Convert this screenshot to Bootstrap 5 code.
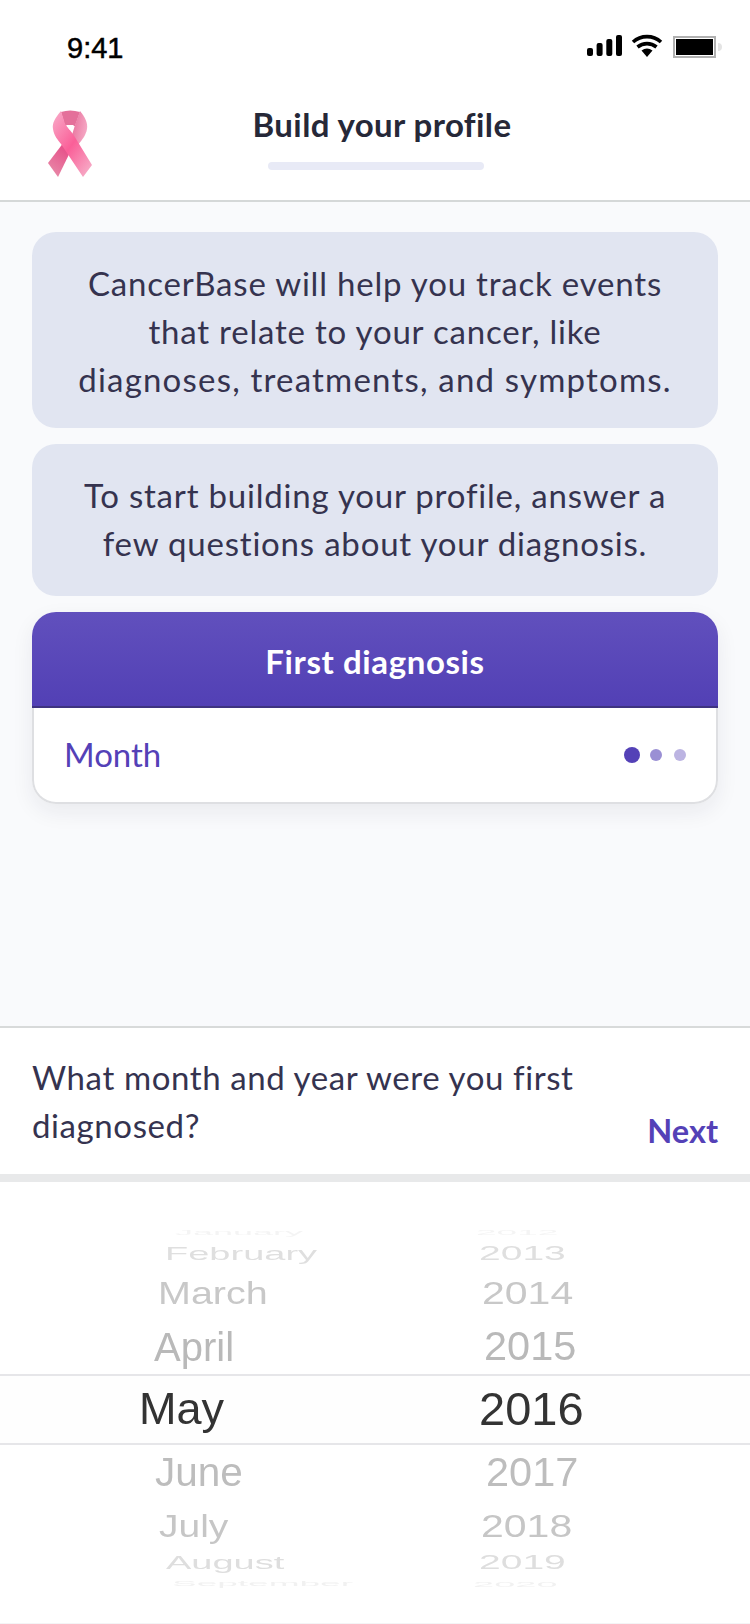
<!DOCTYPE html>
<html lang="en">
<head>
    <meta charset="UTF-8">
    <meta name="viewport" content="width=device-width, initial-scale=1.0">
    <title>Build your profile</title>
    <link href="https://cdn.jsdelivr.net/npm/bootstrap@5.3.3/dist/css/bootstrap.min.css" rel="stylesheet">
    <style>
        body {
            font-family: 'Lato', 'Liberation Sans', sans-serif;
            background-color: #fff;
            color: #35334f;
        }

        .phone {
            width: 750px;
            height: 1624px;
            overflow: hidden;
        }

        /* Status bar */
        .status-bar {
            height: 92px;
            padding: 26px 28px 0 67px;
        }

        .status-time {
            font-family: 'Liberation Sans', sans-serif;
            font-size: 29px;
            line-height: 44px;
            font-weight: 400;
            color: #000;
            -webkit-text-stroke: 0.5px #000;
        }

        .status-icons {
            margin-top: 8px;
        }

        /* Title area */
        .top-bar {
            height: 110px;
            border-bottom: 2px solid #d5d8d8;
        }

        .ribbon-logo {
            left: 47px;
            top: 18px;
        }

        .page-title {
            font-size: 33px;
            letter-spacing: 0.4px;
            line-height: 40px;
            font-weight: 700;
            color: #262838;
            margin: 12px 0 18px 0;
            transform: translateX(7px);
        }

        .title-progress {
            width: 216px;
            height: 8px;
            border-radius: 4px;
            background-color: #e8eaf6;
            transform: translateX(1px);
        }

        /* Conversation */
        .chat-area {
            background-color: #f9fafc;
            padding: 30px 32px 0 32px;
            height: 824px;
        }

        .chat-bubble {
            background-color: #e1e5f1;
            border-radius: 24px;
            font-size: 33px;
            letter-spacing: 0.8px;
            line-height: 48px;
            text-align: center;
            color: #35334f;
            margin-bottom: 16px;
        }

        .line-wide {
            letter-spacing: 1.2px;
        }

        .bubble-one {
            height: 196px;
            padding-top: 27px;
        }

        .bubble-two {
            height: 152px;
            padding-top: 27px;
        }

        .diagnosis-card {
            border: 0;
            border-radius: 24px;
            box-shadow: 0 8px 22px rgba(30, 30, 60, 0.07);
            background-color: #fff;
        }

        .diagnosis-head {
            height: 96px;
            line-height: 98px;
            padding: 0;
            text-align: center;
            font-size: 33px;
            letter-spacing: 0.6px;
            font-weight: 700;
            color: #fff;
            background: linear-gradient(180deg, #6150bd 0%, #5240b5 100%);
            border: 0;
            border-bottom: 2px solid #3e3380;
            border-radius: 24px 24px 0 0 !important;
        }

        .diagnosis-body {
            height: 96px;
            padding: 0 30px 0 30px;
            border: 2px solid #dedfe2;
            border-top: 0;
            border-radius: 0 0 24px 24px;
            color: #5441b7;
            font-size: 33px;
        }

        .step-dot {
            width: 12px;
            height: 12px;
            border-radius: 50%;
            margin-left: 12px;
            background-color: #bcb4e2;
        }

        .step-dot.is-on {
            width: 16px;
            height: 16px;
            background-color: #5441b7;
        }

        .step-dot.is-next {
            margin-left: 10px;
            background-color: #9a8fd4;
        }

        /* Question */
        .question-bar {
            height: 156px;
            border-top: 2px solid #d8dada;
            border-bottom: 8px solid #e8e9ea;
            padding: 25px 32px 0 32px;
        }

        .question-text {
            font-size: 33px;
            letter-spacing: 0.6px;
            line-height: 48px;
            color: #35334f;
        }

        .next-link {
            font-size: 32.5px;
            font-weight: 700;
            line-height: 40px;
            color: #5441b7;
            text-decoration: none;
            margin-top: 58px;
        }

        /* Date wheel */
        .wheel {
            height: 442px;
            padding-top: 48px;
            font-family: 'Liberation Sans', sans-serif;
            border-bottom: 1px solid #f4f4f6;
        }

        .wheel-band {
            left: 0;
            right: 0;
            top: 192px;
            height: 71px;
            background-color: #fefefe;
            border-top: 2px solid #e6e6e9;
            border-bottom: 2px solid #e6e6e9;
        }

        .wheel-col {
            width: 345px;
            filter: blur(0.4px);
        }

        .col-years {
            width: 300px;
        }

        .wheel-item {
            white-space: nowrap;
            display: flex;
            align-items: center;
            transform-origin: left center;
        }

        .wheel-item span {
            display: inline-block;
        }

        .row-a { height: 6px; font-size: 36px; color: #f4f4f4; }
        .row-b { height: 34px; font-size: 38px; color: #dfdfdf; }
        .row-c { height: 47px; font-size: 39.5px; color: #c8c8c8; }
        .row-d { height: 59px; font-size: 40px; color: #b9b9b9; }
        .row-e { height: 66px; font-size: 45px; color: #333; }
        .row-f { height: 61px; font-size: 40.5px; color: #bdbdbd; }
        .row-g { height: 48px; font-size: 39px; color: #c6c6c6; }
        .row-h { height: 22px; font-size: 38px; color: #dedede; }
        .row-i { height: 22px; font-size: 37px; color: #f1f1f1; }

        .row-a span { transform: scaleY(0.2); }
        .row-b span { transform: scaleY(0.5); }
        .row-c span { transform: scaleY(0.78); }
        .row-g span { transform: scaleY(0.78); }
        .row-h span { transform: scaleY(0.5); }
        .row-i span { transform: scaleY(0.2); }

        .col-months .row-a { margin-left: 175px; }
        .col-months .row-b { margin-left: 165px; }
        .col-months .row-c { margin-left: 158px; }
        .col-months .row-d { margin-left: 154px; }
        .col-months .row-e { margin-left: 139px; }
        .col-months .row-f { margin-left: 155px; }
        .col-months .row-g { margin-left: 159px; }
        .col-months .row-h { margin-left: 166px; }
        .col-months .row-i { margin-left: 172px; }

        .col-years .row-a { margin-left: 131px; font-size: 37px; }
        .col-years .row-b { margin-left: 134px; font-size: 39px; }
        .col-years .row-c { margin-left: 137px; font-size: 41px; }
        .col-years .row-d { margin-left: 139px; font-size: 41.5px; }
        .col-years .row-e { margin-left: 134px; font-size: 47px; }
        .col-years .row-f { margin-left: 141px; font-size: 41.5px; }
        .col-years .row-g { margin-left: 136px; font-size: 41px; }
        .col-years .row-h { margin-left: 134px; font-size: 39px; }
        .col-years .row-i { margin-left: 128px; font-size: 38px; }
    </style>
</head>
<body>
    <div class="phone d-flex flex-column">
        <div class="status-bar d-flex justify-content-between">
            <div class="status-time">9:41</div>
            <svg class="status-icons" width="136" height="26" viewBox="0 0 136 26">
                <rect x="1" y="14" width="6" height="8" rx="2" fill="#000"/>
                <rect x="10.600" y="9" width="6" height="13" rx="2" fill="#000"/>
                <rect x="20.300" y="5" width="6" height="17" rx="2" fill="#000"/>
                <rect x="30" y="1" width="6" height="21" rx="2" fill="#000"/>
                <path d="M47 8 A21 21 0 0 1 75 8 M51.500 13 A15 15 0 0 1 70.500 13" fill="none" stroke="#000" stroke-width="3.600"/>
                <path d="M55.500 16.500 A9 9 0 0 1 66.500 16.500 L61 23 Z" fill="#000"/>
                <rect x="88" y="3" width="41" height="20" fill="#fff" stroke="#b0b0b0" stroke-width="2"/>
                <rect x="90" y="5" width="37" height="16" fill="#000"/>
                <path d="M132 9 a4 4 0 0 1 0 8 Z" fill="#e4e4e4"/>
            </svg>
        </div>

        <div class="top-bar position-relative d-flex flex-column align-items-center">
            <svg class="ribbon-logo position-absolute" width="46" height="68" viewBox="0 0 46 68">
                <defs>
                    <linearGradient id="frontStrap" x1="0.1" y1="0" x2="0.9" y2="1">
                        <stop offset="0" stop-color="#f9a7c6"/>
                        <stop offset="0.5" stop-color="#fa5f98"/>
                        <stop offset="1" stop-color="#f6afc9"/>
                    </linearGradient>
                    <linearGradient id="backStrap" x1="0.8" y1="0" x2="0.2" y2="1">
                        <stop offset="0" stop-color="#e63f80"/>
                        <stop offset="1" stop-color="#e88ba9"/>
                    </linearGradient>
                    <linearGradient id="rightLoop" x1="0" y1="0" x2="1" y2="0.4">
                        <stop offset="0" stop-color="#e66c98"/>
                        <stop offset="1" stop-color="#f5a6c3"/>
                    </linearGradient>
                </defs>
                <path d="M29 30 L11 67 L1 53 L17 32 Z" fill="url(#backStrap)"/>
                <path d="M14 2 Q23 -1 33 2 L28 16 L18 16 Z" fill="#e4709a"/>
                <path d="M33 1 C38 7 41 13 40 19 C39 25 35 30 31 35 L25 25 L28 15 Z" fill="url(#rightLoop)"/>
                <path d="M14 1 C8 8 5 13 6 19 C7 26 11 30 14 34 L36 67 L45 55 L26 24 L18 14 Z" fill="url(#frontStrap)"/>
                <path d="M19 15 L27 15 L23 20 Z" fill="#fff"/>
            </svg>
            <div class="page-title">Build your profile</div>
            <div class="title-progress"></div>
        </div>

        <div class="chat-area">
            <div class="chat-bubble bubble-one">CancerBase will help you track events<br>that relate to your cancer, like<br><span class="line-wide">diagnoses, treatments, and symptoms.</span></div>
            <div class="chat-bubble bubble-two">To start building your profile, answer a<br>few questions about your diagnosis.</div>
            <div class="card diagnosis-card">
                <div class="card-header diagnosis-head">First diagnosis</div>
                <div class="card-body diagnosis-body d-flex align-items-center">
                    <div class="flex-grow-1">Month</div>
                    <div class="step-dot is-on"></div>
                    <div class="step-dot is-next"></div>
                    <div class="step-dot"></div>
                </div>
            </div>
        </div>

        <div class="question-bar d-flex justify-content-between">
            <div class="question-text">What month and year were you first<br>diagnosed?</div>
            <a class="next-link" href="#">Next</a>
        </div>

        <div class="wheel position-relative d-flex">
            <div class="wheel-band position-absolute"></div>
            <div class="wheel-col col-months position-relative">
                <div class="wheel-item row-a"><span>January</span></div>
                <div class="wheel-item row-b"><span>February</span></div>
                <div class="wheel-item row-c"><span>March</span></div>
                <div class="wheel-item row-d"><span>April</span></div>
                <div class="wheel-item row-e"><span>May</span></div>
                <div class="wheel-item row-f"><span>June</span></div>
                <div class="wheel-item row-g"><span>July</span></div>
                <div class="wheel-item row-h"><span>August</span></div>
                <div class="wheel-item row-i"><span>September</span></div>
            </div>
            <div class="wheel-col col-years position-relative">
                <div class="wheel-item row-a"><span>2012</span></div>
                <div class="wheel-item row-b"><span>2013</span></div>
                <div class="wheel-item row-c"><span>2014</span></div>
                <div class="wheel-item row-d"><span>2015</span></div>
                <div class="wheel-item row-e"><span>2016</span></div>
                <div class="wheel-item row-f"><span>2017</span></div>
                <div class="wheel-item row-g"><span>2018</span></div>
                <div class="wheel-item row-h"><span>2019</span></div>
                <div class="wheel-item row-i"><span>2020</span></div>
            </div>
        </div>
    </div>

    <script src="https://cdn.jsdelivr.net/npm/bootstrap@5.3.3/dist/js/bootstrap.bundle.min.js"></script>
</body>
</html>
